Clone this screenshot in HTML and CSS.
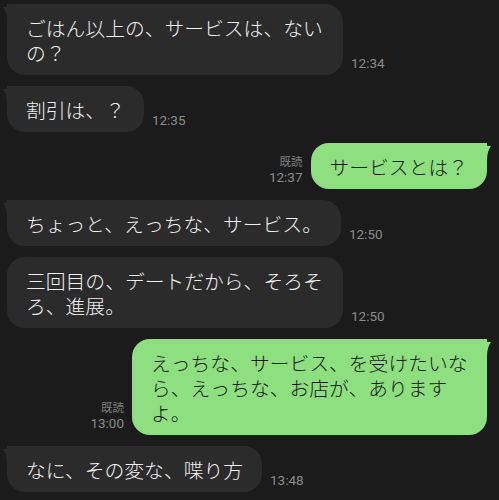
FILE: index.html
```html
<!DOCTYPE html>
<html lang="ja">
  <head>
    <meta charset="UTF-8">
    <meta name="viewport" content="width=device-width, initial-scale=1.0">
    <title>トーク</title>
    <link rel="stylesheet" href="styles.css">
  </head>
  <body>
    <div class="chat">
        <div class="row in">
            <div class="bubble tail">
                <svg class="tip" viewBox="0 0 14 18"><path d="M4 18 C4 11 2.5 6 0 3 C4 3.5 8 1.5 10 0 L14 0 L14 18 Z"/></svg>
                ごはん以上の、サービスは、ないの？
            </div>
            <div class="meta"><span class="time">12:34</span></div>
        </div>

        <div class="row in">
            <div class="bubble tail">
                <svg class="tip" viewBox="0 0 14 18"><path d="M4 18 C4 11 2.5 6 0 3 C4 3.5 8 1.5 10 0 L14 0 L14 18 Z"/></svg>
                割引は、？
            </div>
            <div class="meta"><span class="time">12:35</span></div>
        </div>

        <div class="row out">
            <div class="meta"><span class="read">既読</span><span class="time">12:37</span></div>
            <div class="bubble tail">
                <svg class="tip" viewBox="0 0 14 18"><path d="M4 18 C4 11 2.5 6 0 3 C4 3.5 8 1.5 10 0 L14 0 L14 18 Z"/></svg>
                サービスとは？
            </div>
        </div>

        <div class="row in">
            <div class="bubble tail">
                <svg class="tip" viewBox="0 0 14 18"><path d="M4 18 C4 11 2.5 6 0 3 C4 3.5 8 1.5 10 0 L14 0 L14 18 Z"/></svg>
                ちょっと、えっちな、サービス。
            </div>
            <div class="meta"><span class="time">12:50</span></div>
        </div>

        <div class="row in">
            <div class="bubble">三回目の、デートだから、そろそろ、進展。</div>
            <div class="meta"><span class="time">12:50</span></div>
        </div>

        <div class="row out">
            <div class="meta"><span class="read">既読</span><span class="time">13:00</span></div>
            <div class="bubble tail">
                <svg class="tip" viewBox="0 0 14 18"><path d="M4 18 C4 11 2.5 6 0 3 C4 3.5 8 1.5 10 0 L14 0 L14 18 Z"/></svg>
                えっちな、サービス、を受けたいなら、えっちな、お店が、ありますよ。
            </div>
        </div>

        <div class="row in">
            <div class="bubble tail">
                <svg class="tip" viewBox="0 0 14 18"><path d="M4 18 C4 11 2.5 6 0 3 C4 3.5 8 1.5 10 0 L14 0 L14 18 Z"/></svg>
                なに、その変な、喋り方
            </div>
            <div class="meta"><span class="time">13:48</span></div>
        </div>
    </div>
  </body>
</html>
```

FILE: styles.css
```css
body {
    margin: 0;
    background-color: #1b1b1b;
    font-family: "Noto Sans CJK JP", "Noto Sans", sans-serif;
}
.chat {
    display: flex;
    flex-direction: column;
    gap: 11px;
    padding: 4px 12px 0 7px;
}
.row {
    display: flex;
    align-items: flex-end;
    gap: 8px;
}
.row.out {
    justify-content: flex-end;
}
.bubble {
    position: relative;
    padding: 10.5px 19px;
    border-radius: 18px;
    font-size: 19.8px;
    font-weight: 300;
    line-height: 25px;
    background-color: #2b2b2b;
    color: #efefef;
    max-width: 298px;
}
.out .bubble {
    background-color: #8ddf80;
    color: #1a1a1a;
    max-width: 317px;
}
.tip {
    position: absolute;
    top: 0;
    left: -4px;
    width: 14px;
    height: 18px;
    fill: #2b2b2b;
}
.out .tip {
    left: auto;
    right: -4px;
    transform: scaleX(-1);
    fill: #8ddf80;
}
.in .bubble.tail {
    border-top-left-radius: 0;
}
.out .bubble.tail {
    border-top-right-radius: 0;
}
.meta {
    display: flex;
    flex-direction: column;
    align-items: flex-end;
    margin-bottom: 4px;
    color: #8a8a8a;
}
.time {
    font-family: Roboto, "Liberation Sans", sans-serif;
    font-size: 13.5px;
    line-height: 16px;
}
.read {
    font-size: 11.5px;
    line-height: 16px;
    color: #7d7d7d;
}
```
